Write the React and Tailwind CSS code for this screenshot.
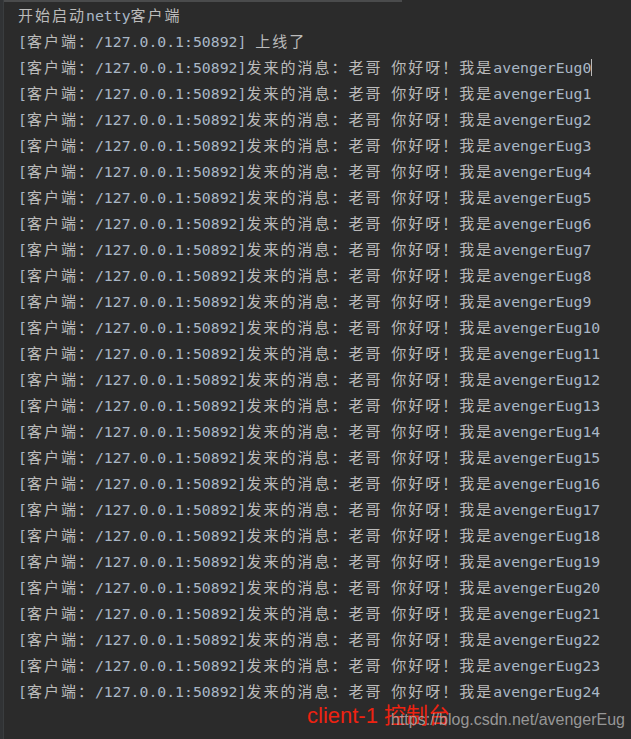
import React from "react";

const MONO = "text-[14.8px] text-[#a9b7c6] [font-family:'DejaVu_Sans_Mono','Liberation_Mono',monospace]";
const CJK = "text-[15px] tracking-[2px] text-[#bbbbbb] [font-family:'Noto_Sans_CJK_SC',sans-serif]";

function M({ children }) {
  return <span className={MONO}>{children}</span>;
}
function C({ children }) {
  return <span className={CJK}>{children}</span>;
}

function Line({ children }) {
  return (
    <div className="h-[26px] leading-[26px] whitespace-pre flex items-baseline">
      {children}
    </div>
  );
}

export default function App() {
  const msgs = Array.from({ length: 25 }, (_, i) => i);
  return (
    <div className="relative w-[631px] h-[739px] bg-[#2b2b2b] overflow-hidden flex">
      <div className="w-[4px] h-full bg-[#313335] border-r border-[#3a3d3f]" />
      <div className="flex-1 flex flex-col">
        <div className="h-[2px] w-[398px] bg-[#4a4b4c]" />
        <div className="pl-[14px] flex flex-col">
          <Line>
            <C>开始启动</C>
            <M>netty</M>
            <C>客户端</C>
          </Line>
          <Line>
            <M>[</M>
            <C>客户端：</C>
            <M>/127.0.0.1:50892] </M>
            <C>上线了</C>
          </Line>
          {msgs.map((i) => (
            <Line key={i}>
              <M>[</M>
              <C>客户端：</C>
              <M>/127.0.0.1:50892]</M>
              <C>发来的消息：老哥</C>
              <M> </M>
              <C>你好呀！我是</C>
              <M>avengerEug{i}</M>
              {i === 0 && (
                <span className="inline-block w-px h-[17px] bg-[#bbbbbb] self-center" />
              )}
            </Line>
          ))}
        </div>
      </div>
      <div className="absolute left-[307px] top-[701px] text-[22px] leading-[30px] text-[#ee2211] whitespace-pre [font-family:'Liberation_Sans','Noto_Sans_CJK_SC',sans-serif]">
        client-1 控制台
      </div>
      <div className="absolute left-[391px] top-[709px] text-[16px] leading-[22px] text-[#b4b4b4]/80 whitespace-pre [font-family:'Liberation_Sans',sans-serif]">
        https://blog.csdn.net/avengerEug
      </div>
    </div>
  );
}
